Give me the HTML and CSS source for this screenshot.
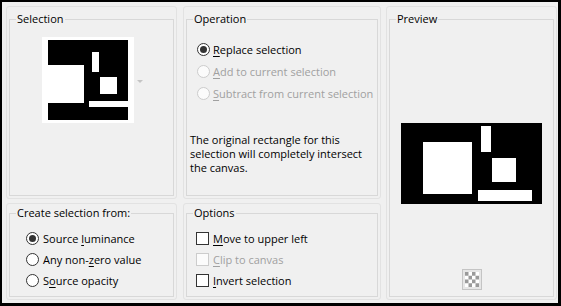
FILE: index.html
```html
<!DOCTYPE html>
<html>
<head>
<meta charset="utf-8">
<link rel="stylesheet" href="styles.css">
</head>
<body>
<div class="dialog">
  <div class="panel top sel">
    <fieldset class="group">
      <legend>Selection</legend>
      <div class="thumb-row">
        <div class="thumb">
          <div class="canvas thumb-canvas">
            <span class="blk" style="left:0;top:25px;width:36px;height:38px"></span>
            <span class="blk" style="left:44px;top:12px;width:7px;height:20px"></span>
            <span class="blk" style="left:52px;top:37px;width:17px;height:17px"></span>
            <span class="blk" style="left:41px;top:61px;width:39px;height:6px"></span>
          </div>
        </div>
        <span class="drop-arrow"></span>
      </div>
    </fieldset>
  </div>

  <div class="panel top op">
    <fieldset class="group">
      <legend>Operation</legend>
      <div class="rows op-rows">
        <label class="row"><span class="radio on"></span><span><u>R</u>eplace selection</span></label>
        <label class="row disabled"><span class="radio"></span><span><u>A</u>dd to current selection</span></label>
        <label class="row disabled"><span class="radio"></span><span><u>S</u>ubtract from current selection</span></label>
      </div>
      <p class="note">The original rectangle for this selection will completely intersect the canvas.</p>
    </fieldset>
  </div>

  <div class="panel prev">
    <fieldset class="group">
      <legend>Preview</legend>
      <div class="prev-body">
        <div class="canvas prev-canvas">
          <span class="blk" style="left:22px;top:19px;width:49px;height:52px"></span>
          <span class="blk" style="left:80px;top:3px;width:10px;height:26px"></span>
          <span class="blk" style="left:91px;top:35px;width:24px;height:24px"></span>
          <span class="blk" style="left:77px;top:67px;width:54px;height:11px"></span>
        </div>
        <div class="checker">
          <svg width="20" height="21" viewBox="0 0 20 21">
            <rect x="0.5" y="0.5" width="19" height="20" fill="#e6e6e6" stroke="#c4c4c4"/>
            <rect x="3" y="3" width="14" height="15" fill="#ffffff"/>
            <g fill="#9a9a9a">
              <rect x="3" y="3" width="3.5" height="3.75"/><rect x="10" y="3" width="3.5" height="3.75"/>
              <rect x="6.5" y="6.75" width="3.5" height="3.75"/><rect x="13.5" y="6.75" width="3.5" height="3.75"/>
              <rect x="3" y="10.5" width="3.5" height="3.75"/><rect x="10" y="10.5" width="3.5" height="3.75"/>
              <rect x="6.5" y="14.25" width="3.5" height="3.75"/><rect x="13.5" y="14.25" width="3.5" height="3.75"/>
            </g>
          </svg>
        </div>
      </div>
    </fieldset>
  </div>

  <div class="panel bottom src">
    <fieldset class="group">
      <legend>Create selection from:</legend>
      <div class="rows b-rows src-rows">
        <label class="row"><span class="radio on"></span><span>Source <u>l</u>uminance</span></label>
        <label class="row"><span class="radio"></span><span>Any non-<u>z</u>ero value</span></label>
        <label class="row"><span class="radio"></span><span>S<u>o</u>urce opacity</span></label>
      </div>
    </fieldset>
  </div>

  <div class="panel bottom opts">
    <fieldset class="group">
      <legend>Options</legend>
      <div class="rows b-rows opt-rows">
        <label class="row"><span class="check"></span><span><u>M</u>ove to upper left</span></label>
        <label class="row disabled"><span class="check"></span><span><u>C</u>lip to canvas</span></label>
        <label class="row"><span class="check"></span><span><u>I</u>nvert selection</span></label>
      </div>
    </fieldset>
  </div>
</div>
</body>
</html>
```

FILE: styles.css
```css
html, body {
  margin: 0;
  padding: 0;
  background: #f0f0f0;
}
body {
  font-family: "Open Sans", "Noto Sans", sans-serif;
  font-size: 11px;
  color: #000;
}
.dialog {
  box-sizing: border-box;
  width: 561px;
  height: 306px;
  border-style: solid;
  border-color: #000;
  border-width: 2px 3px 3px 2px;
  padding: 4px 2px 3px 4px;
  display: grid;
  grid-template-columns: 171px 198px 170px;
  grid-template-rows: 193px 97px;
  column-gap: 6px;
  row-gap: 4px;
  column-gap: 6px;
}
.opts { }
.panel {
  box-sizing: border-box;
  border: 1px solid #e2e2e2;
  border-radius: 3px;
  padding: 5px 2px 2px 2px;
  display: flex;
}
.panel.bottom { padding-top: 2px; }
.sel { grid-column: 1; grid-row: 1; }
.op { grid-column: 2; grid-row: 1; }
.prev { grid-column: 3; grid-row: 1 / span 2; margin-left: -1px; }
.src { grid-column: 1; grid-row: 2; }
.opts { grid-column: 2; grid-row: 2; }

.group {
  flex: 1;
  margin: 0;
  padding: 0;
  min-width: 0;
  border: 1px solid #d8d8d8;
}
legend {
  margin-left: 6px;
  padding: 0 1px;
  line-height: 14px;
  height: 14px;
}

.thumb-row {
  display: flex;
  align-items: center;
  margin-top: 11px;
  margin-left: 32px;
}
.thumb {
  width: 92px;
  height: 86px;
  background: #fff;
  display: flex;
  align-items: center;
  justify-content: center;
}
.canvas {
  position: relative;
  background: #000;
}
.thumb-canvas { width: 80px; height: 80px; }
.blk {
  position: absolute;
  background: #fff;
}
.drop-arrow {
  width: 0;
  height: 0;
  margin-left: 3px;
  margin-top: 2px;
  border-left: 3px solid transparent;
  border-right: 3px solid transparent;
  border-top: 3px solid #c4c4c4;
}

.rows { display: flex; flex-direction: column; }
.row {
  display: flex;
  align-items: center;
  height: 22px;
  white-space: nowrap;
}
.op-rows { margin-top: 12px; padding-left: 10px; }
.op-rows .row span:last-child { margin-left: 3px; }
.row u { text-decoration-thickness: 1px; text-underline-offset: 2px; }
.radio {
  box-sizing: border-box;
  width: 13px;
  height: 13px;
  border: 1px solid #333;
  border-radius: 50%;
  background: #fff;
  position: relative;
  flex: none;
}
.radio.on::after {
  content: "";
  position: absolute;
  left: 2px;
  top: 2px;
  width: 7px;
  height: 7px;
  border-radius: 50%;
  background: #333;
}
.check {
  box-sizing: border-box;
  width: 13px;
  height: 13px;
  border: 1px solid #333;
  background: #fff;
  flex: none;
}
.disabled { color: #a0a0a0; }
.disabled .radio, .disabled .check {
  border-color: #cccccc;
  background: #fbfbfb;
}

.note {
  margin: 29px 0 0 3px;
  width: 178px;
  line-height: 14px;
}

.b-rows { margin-top: 8px; }
.b-rows .row { height: 21px; }
.src-rows { padding-left: 16px; }
.src-rows .row span:last-child { margin-left: 4px; }
.opt-rows { padding-left: 9px; }
.opt-rows .row span:last-child { margin-left: 4px; }

.prev-body {
  display: flex;
  flex-direction: column;
  align-items: center;
  margin-top: 97px;
}
.prev-canvas { width: 141px; height: 81px; }
.checker { margin-top: 65px; height: 21px; }
.checker svg { display: block; }
```
